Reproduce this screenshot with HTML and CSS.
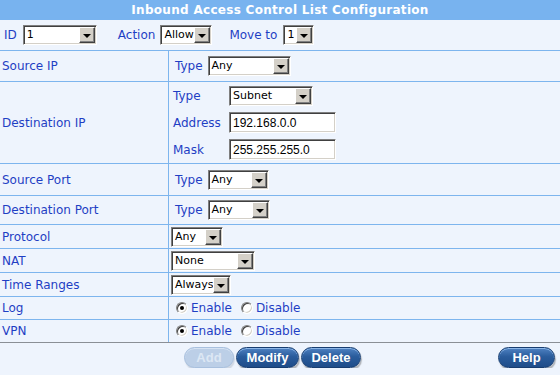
FILE: index.html
```html
<!DOCTYPE html>
<html lang="en">
<head>
  <meta charset="UTF-8">
  <title>Inbound Access Control List Configuration</title>
  <link rel="stylesheet" href="styles.css">
</head>
<body>

  <div class="title">Inbound Access Control List Configuration</div>

  <div class="toprow">
    <span class="lbl-id">ID</span>
    <div class="sel w-id"><span class="txt">1</span><span class="arr"></span></div>
    <span class="lbl-action">Action</span>
    <div class="sel w-action"><span class="txt">Allow</span><span class="arr"></span></div>
    <span class="lbl-move">Move to</span>
    <div class="sel w-move"><span class="txt">1</span><span class="arr"></span></div>
  </div>

  <div class="row h-src">
    <div class="name">Source IP</div>
    <div class="val">
      <span class="pre">Type</span>
      <div class="sel w-srctype"><span class="txt">Any</span><span class="arr"></span></div>
    </div>
  </div>

  <div class="row h-dst">
    <div class="name">Destination IP</div>
    <div class="val">
      <div class="sub">
        <span class="sublbl">Type</span>
        <div class="sel w-dsttype"><span class="txt">Subnet</span><span class="arr"></span></div>
        <span class="sublbl">Address</span>
        <div class="inp">192.168.0.0</div>
        <span class="sublbl">Mask</span>
        <div class="inp">255.255.255.0</div>
      </div>
    </div>
  </div>

  <div class="row h-sport">
    <div class="name">Source Port</div>
    <div class="val">
      <span class="pre">Type</span>
      <div class="sel w-port"><span class="txt">Any</span><span class="arr"></span></div>
    </div>
  </div>

  <div class="row h-dport">
    <div class="name">Destination Port</div>
    <div class="val">
      <span class="pre">Type</span>
      <div class="sel w-port2"><span class="txt">Any</span><span class="arr"></span></div>
    </div>
  </div>

  <div class="row h-small">
    <div class="name">Protocol</div>
    <div class="val">
      <div class="sel w-proto"><span class="txt">Any</span><span class="arr"></span></div>
    </div>
  </div>

  <div class="row h-small">
    <div class="name">NAT</div>
    <div class="val">
      <div class="sel w-nat"><span class="txt">None</span><span class="arr"></span></div>
    </div>
  </div>

  <div class="row h-small">
    <div class="name">Time Ranges</div>
    <div class="val">
      <div class="sel w-time"><span class="txt">Always</span><span class="arr"></span></div>
    </div>
  </div>

  <div class="row h-radio">
    <div class="name">Log</div>
    <div class="val">
      <span class="radio on"></span><span class="opt">Enable</span>
      <span class="radio"></span><span class="opt">Disable</span>
    </div>
  </div>

  <div class="row h-radio last">
    <div class="name">VPN</div>
    <div class="val">
      <span class="radio on"></span><span class="opt">Enable</span>
      <span class="radio"></span><span class="opt">Disable</span>
    </div>
  </div>

  <div class="buttons">
    <button class="btn off w-add">Add</button>
    <button class="btn w-modify">Modify</button>
    <button class="btn w-delete">Delete</button>
    <button class="btn w-help">Help</button>
  </div>

</body>
</html>
```

FILE: styles.css
```css
body {
  margin: 0;
  background-color: #eef4fd;
  font-family: "DejaVu Sans", Verdana, sans-serif;
  font-size: 12px;
  color: #1f3fc4;
}

.title {
  height: 20px;
  background-color: #78b3ef;
  color: white;
  font-weight: bold;
  font-size: 12px;
  text-align: center;
  line-height: 20px;
  letter-spacing: 0.3px;
}

.toprow {
  box-sizing: border-box;
  height: 31px;
  display: flex;
  align-items: center;
  border-bottom: 1px solid #7db5ee;
  padding-left: 4px;
}
.lbl-id { margin-right: 6px; }
.lbl-action { margin-left: 21px; margin-right: 5px; }
.lbl-move { margin-left: 17px; margin-right: 6px; }

.row {
  box-sizing: border-box;
  display: grid;
  grid-template-columns: 169px 1fr;
  border-bottom: 1px solid #7db5ee;
}
.row.last { border-bottom-color: #8a8f96; }
.h-src { height: 31px; }
.h-dst { height: 82px; }
.h-sport { height: 32px; }
.h-dport { height: 29px; }
.h-small { height: 24px; }
.h-radio { height: 23px; }

.name {
  border-right: 1px solid #7db5ee;
  display: flex;
  align-items: center;
  padding-left: 2px;
}
.val {
  display: flex;
  align-items: center;
  padding-left: 2px;
}
.pre {
  margin-left: 4px;
  margin-right: 5px;
}

.sub {
  display: grid;
  grid-template-columns: 58px auto;
  grid-auto-rows: 27px;
  align-items: center;
}
.sublbl { padding-left: 2px; }

/* windows classic looking dropdown */
.sel {
  box-sizing: border-box;
  height: 20px;
  display: flex;
  background: white;
  border: 1px solid;
  border-color: #7f7f7f #ffffff #ffffff #7f7f7f;
  box-shadow: inset 1px 1px 0 #404040, inset -1px -1px 0 #d4d0c8;
  color: black;
  font-size: 11px;
}
.sel .txt {
  flex: 1;
  padding: 2px 0 0 3px;
  line-height: 14px;
  overflow: hidden;
  white-space: nowrap;
}
.sel .arr {
  box-sizing: border-box;
  width: 16px;
  margin: 1px 1px 1px 0;
  background: #d4d0c8;
  border: 1px solid;
  border-color: #ffffff #404040 #404040 #ffffff;
  box-shadow: inset -1px -1px 0 #808080;
  position: relative;
}
.sel .arr::after {
  content: "";
  position: absolute;
  left: 3px;
  top: 6px;
  border-left: 4px solid transparent;
  border-right: 4px solid transparent;
  border-top: 4px solid black;
}
.w-id { width: 74px; }
.w-action { width: 52px; }
.w-move { width: 31px; }
.w-srctype { width: 83px; }
.w-dsttype { width: 84px; }
.w-port { width: 61px; }
.w-port2 { width: 62px; }
.w-proto { width: 52px; }
.w-nat { width: 84px; }
.w-time { width: 60px; }

.inp {
  box-sizing: border-box;
  width: 107px;
  height: 21px;
  background: white;
  border: 1px solid;
  border-color: #7f7f7f #ffffff #ffffff #7f7f7f;
  box-shadow: inset 1px 1px 0 #404040, inset -1px -1px 0 #d4d0c8;
  color: black;
  font-family: "Liberation Sans", Arial, sans-serif;
  font-size: 12px;
  padding: 3px 0 0 3px;
}

.radio {
  box-sizing: border-box;
  width: 12px;
  height: 12px;
  border-radius: 50%;
  background: white;
  border: 1px solid;
  border-color: #808080 #ffffff #ffffff #808080;
  box-shadow: inset 1px 1px 0 #404040, inset -1px -1px 0 #d4d0c8;
  margin-left: 5px;
  margin-right: 3px;
  position: relative;
}
.radio.on::after {
  content: "";
  position: absolute;
  left: 3px;
  top: 3px;
  width: 4px;
  height: 4px;
  border-radius: 50%;
  background: black;
}
.opt { margin-right: 4px; }

.buttons {
  display: flex;
  align-items: flex-start;
  padding: 4px 5px 0 184px;
  gap: 2px;
}
.btn {
  box-sizing: border-box;
  height: 21px;
  padding: 0;
  border-radius: 11px;
  border: 1px solid #173d70;
  background: linear-gradient(#4f82c2, #2a5c9c 45%, #1f4d8a);
  box-shadow: inset 0 1px 0 #8cb6e8, 1px 2px 1px rgba(60, 60, 60, 0.35);
  color: white;
  font-family: "Liberation Sans", Arial, sans-serif;
  font-weight: bold;
  font-size: 13px;
  cursor: pointer;
}
.btn.off {
  border-color: #a8c0de;
  background: #bccfe7;
  box-shadow: inset 0 1px 0 #d6e3f3, 1px 2px 1px rgba(120, 130, 150, 0.25);
  color: #dce7f4;
}
.w-add { width: 50px; }
.w-modify { width: 63px; }
.w-delete { width: 60px; }
.w-help { width: 57px; margin-left: auto; }
```
